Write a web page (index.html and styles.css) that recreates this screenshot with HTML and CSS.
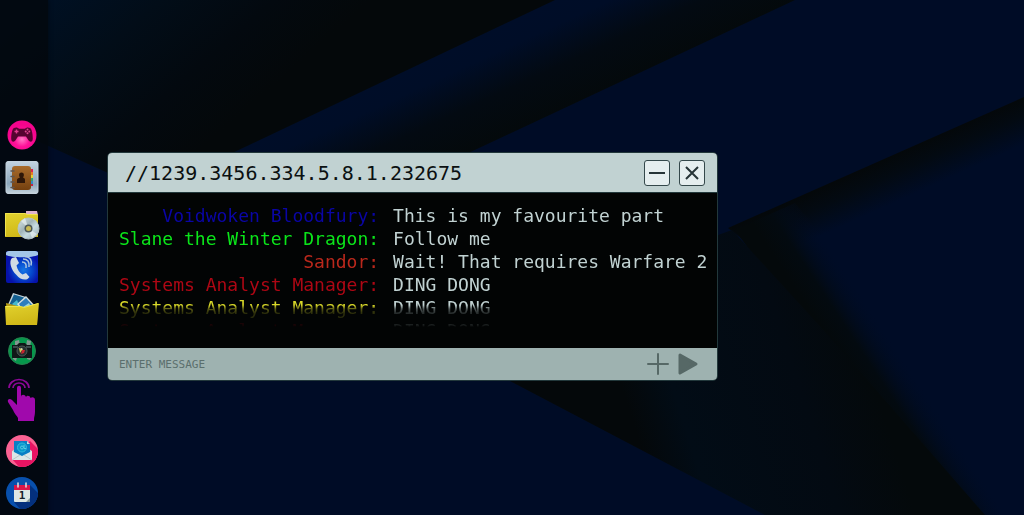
FILE: index.html
```html
<!DOCTYPE html>
<html lang="en">
<head>
<meta charset="utf-8">
<meta name="viewport" content="width=device-width, initial-scale=1">
<title>Desktop chat</title>
<link rel="stylesheet" href="styles.css">
</head>
<body>
<div class="desktop">
  <svg class="wallpaper" viewBox="0 0 1024 515" preserveAspectRatio="none" aria-hidden="true">
    <defs>
      <linearGradient id="band" gradientUnits="userSpaceOnUse" x1="440" y1="54" x2="486" y2="154">
        <stop offset="0" stop-color="#000d28"/><stop offset=".2" stop-color="#000d27"/><stop offset=".55" stop-color="#030a12"/><stop offset="1" stop-color="#04090a"/>
      </linearGradient>
      <linearGradient id="corner" gradientUnits="userSpaceOnUse" x1="60" y1="-10" x2="200" y2="150">
        <stop offset="0" stop-color="#001023"/><stop offset=".35" stop-color="#020d18"/><stop offset=".7" stop-color="#03090f"/><stop offset="1" stop-color="#04080a"/>
      </linearGradient>
      <linearGradient id="edge" gradientUnits="userSpaceOnUse" x1="876" y1="163" x2="894" y2="203">
        <stop offset="0" stop-color="#04080a"/><stop offset=".4" stop-color="#030a12"/><stop offset="1" stop-color="#000c26"/>
      </linearGradient>
      <linearGradient id="wedge" gradientUnits="userSpaceOnUse" x1="640" y1="444" x2="870" y2="370">
        <stop offset="0" stop-color="#04080a"/><stop offset=".2" stop-color="#020c16"/><stop offset=".7" stop-color="#030a12"/><stop offset="1" stop-color="#04090b"/>
      </linearGradient>
      <linearGradient id="shade" gradientUnits="userSpaceOnUse" x1="840" y1="357" x2="884" y2="328">
        <stop offset="0" stop-color="#04090b"/><stop offset=".4" stop-color="#030a10"/><stop offset="1" stop-color="#000c26" stop-opacity="0"/>
      </linearGradient>
    </defs>
    <path fill="#000c26" d="M0 0h1024v515H0z"/>
    <path fill="url(#band)" d="M555 0H795L400 185 150 190z"/>
    <path fill="url(#corner)" d="M0 0H555L150 192 0 124z"/>
    <path fill="url(#edge)" d="M1024 97V182L800 285 728 228z"/>
    <path fill="url(#shade)" d="M735 230L795 203 1024 480V515H940z"/>
    <path fill="url(#wedge)" d="M718 235L732 230 828 335 985 515H765L510 381z"/>
  </svg>

  <nav class="dock" aria-label="Applications">
    <button class="dock-item" type="button" aria-label="Games">
      <svg width="30" height="30" viewBox="0 0 30 30">
        <defs><radialGradient id="pink" cy=".65"><stop offset="0" stop-color="#ff79c4"/><stop offset=".5" stop-color="#ff129a"/><stop offset="1" stop-color="#f5048c"/></radialGradient></defs>
        <circle cx="15" cy="15" r="14.500" fill="url(#pink)"/>
        <path fill="#560330" d="M7 8c2-1.200 4-.5 5 .7h6c1-1.200 3-1.900 5-.7 2 1 2.800 6.500 2.800 10.500 0 4-3 4-4.500 1.500L19 16.500h-8L8.700 20c-1.500 2.500-4.500 2.500-4.500-1.500C4.200 14.500 5 9 7 8z"/>
        <path stroke="#e23d92" stroke-width="1.400" d="M7.500 11.500h4M9.500 9.500v4"/>
        <g fill="#df438e"><circle cx="20.500" cy="9.600" r="1"/><circle cx="20.500" cy="13.200" r="1"/><circle cx="18.700" cy="11.400" r="1"/><circle cx="22.300" cy="11.400" r="1"/></g>
      </svg>
    </button>
    <button class="dock-item" type="button" aria-label="Contacts">
      <svg width="34" height="40" viewBox="0 0 34 40">
        <defs><linearGradient id="tile" x2="0" y2="1"><stop offset="0" stop-color="#c3d3e0"/><stop offset=".7" stop-color="#8ba6bc"/><stop offset="1" stop-color="#c5d3dc"/></linearGradient><linearGradient id="leather" x2="0" y2="1"><stop offset="0" stop-color="#a96c2c"/><stop offset="1" stop-color="#74400f"/></linearGradient></defs>
        <rect x="1" y="3.500" width="32" height="32" rx="2" fill="url(#tile)" stroke="#c4d2dd"/>
        <path fill="#db244c" d="M24 11h4v4h-4z"/><path fill="#e77c22" d="M24 14h4v4h-4z"/><path fill="#e4cf35" d="M24 17h4v4h-4z"/><path fill="#36a56c" d="M24 20h4v4h-4z"/><path fill="#318bc6" d="M24 23h4v3h-4z"/><path fill="#c32448" d="M24 26h4v2h-4z"/>
        <rect x="7" y="8" width="19" height="24" rx="3" fill="url(#leather)"/>
        <path fill="#2d1608" d="M12 25v-3c0-1.500 1.500-2 3-2.500-1.500-2-1.200-5 1.500-5s3 3 1.500 5c1.500.5 2 1 2 2.500v3z"/>
        <path stroke="#5f564f" stroke-width="1.500" stroke-linecap="round" d="M6 13h3M6 18.500h3M6 24h3M6 29.500h3"/>
      </svg>
    </button>
    <button class="dock-item" type="button" aria-label="Disc folder">
      <svg width="36" height="36" viewBox="0 0 36 36">
        <defs><linearGradient id="gold" x2=".3" y2="1"><stop offset="0" stop-color="#e2d32f"/><stop offset="1" stop-color="#d0b818"/></linearGradient><linearGradient id="disc" x2="1" y2="1"><stop offset="0" stop-color="#dce9ea"/><stop offset=".4" stop-color="#a1b4b8"/><stop offset=".6" stop-color="#c6dce1"/><stop offset="1" stop-color="#95a6b1"/></linearGradient></defs>
        <path fill="#ddb3ce" d="M22 5h11l1 4H22z"/>
        <path fill="url(#gold)" d="M1 7h20l2 1.500h11V31H1z"/><path fill="none" stroke="#f0e34f" d="M1.500 30V7.500H21l2 1h10"/>
        <circle cx="24.500" cy="22.500" r="10.500" fill="url(#disc)" stroke="#b3c4c8"/>
        <path fill="#edf4f4" opacity=".65" d="M24.500 22.500L17 15l4-3zM24.500 22.500L33 28l-5 4z"/>
        <circle cx="24.500" cy="22.500" r="4" fill="#4e5958"/><circle cx="24.500" cy="22.500" r="2.500" fill="#c8ba52"/>
      </svg>
    </button>
    <button class="dock-item" type="button" aria-label="Phone">
      <svg width="34" height="34" viewBox="0 0 34 34">
        <defs><radialGradient id="call" cx=".55" cy=".6"><stop offset="0" stop-color="#1677e5"/><stop offset=".55" stop-color="#0546cc"/><stop offset="1" stop-color="#0612aa"/></radialGradient></defs>
        <rect x="1" y="1" width="32" height="32" rx="2" fill="url(#call)"/>
        <path fill="#a2c5e8" d="M1 3c0-1 1-2 3-2h26c2 0 3 1 3 2v2c-5 3-27 3-32 0z"/>
        <path fill="#d0dbe3" d="M7 8l4-1 3 6-2.500 2.500c1 4.500 3 7 6 9l3.500-1.500 3.500 4-2 2c-3 1.500-8 0-11-4C6 20 3.500 11 7 8z"/>
        <path fill="none" stroke="#adc6df" stroke-width="1.500" d="M17 12q5 0 4 6M18 9q7 0 6 8M20 6.500q8 1 6 9"/>
      </svg>
    </button>
    <button class="dock-item" type="button" aria-label="Pictures folder">
      <svg width="34" height="36" viewBox="0 0 34 36">
        <path fill="#c3d3da" d="M8 1l13 4-4 15-15-5z"/><path fill="#145f91" d="M9 2.500l10 3-3 12-12-4z"/><path fill="#46b8cd" d="M7 12l5-4 3 7-1 4z"/>
        <path fill="#d1dedf" d="M21 4l12 13-11 8-10-13z"/><path fill="#2e7ebc" d="M21 6l9 10-9 7-7-11z"/><path fill="#9bd3da" d="M18 15l6-4 3 6-5 4z"/>
        <path fill="#b39916" d="M1 11l12 3 4 4h16l-1 15H3z"/>
        <path fill="url(#gold)" d="M0 14h15l4 1 15-4-2 22H1z"/><path fill="none" stroke="#efe448" d="M1 14.500h14l4 1 14-4"/>
      </svg>
    </button>
    <button class="dock-item" type="button" aria-label="Camera">
      <svg width="30" height="30" viewBox="0 0 30 30">
        <circle cx="15" cy="15" r="13.500" fill="#05984c" stroke="#27804e"/>
        <path fill="#83968f" d="M8 5l4-1 1 5H8zM20 4l4 1-1 6h-4zM6 20l5-2-2 7-3-2zM20 19l5 1-2 4-3-1z"/>
        <path fill="#101818" d="M5 9h5l2-2h6l2 2h5v13H5z"/><path stroke="#677b7c" d="M6 11h5m8 0h5"/>
        <circle cx="15" cy="15" r="5" fill="#253030" stroke="#4b5856"/><path fill="#d1c65a" d="M12 12l4 1-3 4z"/><path fill="#c82531" d="M15 14h3l-1 3-3 1z"/><path fill="#dae0cd" d="M14 12l2 1-2 1z"/>
      </svg>
    </button>
    <button class="dock-item" type="button" aria-label="Touch">
      <svg width="34" height="52" viewBox="0 0 34 52">
        <path fill="none" stroke="#8c0896" stroke-width="1.700" d="M4 14a10 8.500 0 0 1 20 0M8 14a6 5 0 0 1 12 0"/>
        <path fill="#a009ac" d="M12 14c0-3 4-3 4 0v9c0-3 4-3 5 0 1-2 4-1.500 4.500 1 2-1.500 4.500-.5 4.500 2v12c0 3-1 5-1 7v2H13v-3c-1-2-4-5-5-8L3 28c-1-3 2-4 4-2l5 5z"/>
      </svg>
    </button>
    <button class="dock-item" type="button" aria-label="Mail">
      <svg width="34" height="34" viewBox="0 0 34 34">
        <defs><clipPath id="mailRound"><circle cx="17" cy="17" r="16"/></clipPath></defs>
        <g clip-path="url(#mailRound)"><path fill="#fa6293" d="M0 0h34v34H0z"/><path fill="#e81463" d="M25 7l9 9v18H15l-8-9z"/></g>
        <path fill="#bdd2d3" d="M7 17l10-7 10 7v9H7z"/><path fill="#087fc4" d="M9 7h13l3 3v10l-8 4-8-4z"/><path fill="#c8d9dd" d="M22 7v3h3z"/>
        <circle cx="17" cy="13.500" r="4.500" fill="#079acd" stroke="#33b8db"/><circle cx="17" cy="13.500" r="1.500" fill="none" stroke="#5dc9df"/><path fill="none" stroke="#5dc9df" d="M19 11v3q1 2 2 0"/>
        <path fill="#dce7e7" d="M7 17l10 5 10-5v9H7z"/><path fill="none" stroke="#b7c8cb" d="M7 26l8-5m12 5l-8-5"/>
      </svg>
    </button>
    <button class="dock-item" type="button" aria-label="Calendar">
      <svg width="34" height="34" viewBox="0 0 34 34">
        <defs><clipPath id="dateRound"><circle cx="17" cy="17" r="16"/></clipPath></defs>
        <g clip-path="url(#dateRound)"><path fill="#0850ad" d="M0 0h34v34H0z"/><path fill="#04307d" d="M25 9l9 9v16H16l-7-8z"/></g>
        <rect x="9" y="9" width="16" height="17" rx="1" fill="#dde8e5"/><path fill="#db164b" d="M9 9h16v5H9z"/>
        <path stroke="#dce4e5" stroke-width="1.500" stroke-linecap="round" d="M13 7v4M21 7v4"/>
        <text class="calendar-day" x="17" y="23" text-anchor="middle">1</text><path fill="#819598" d="M25 22v4h-4z"/>
      </svg>
    </button>
  </nav>

  <main class="chat-window">
    <header class="title-bar">
      <h1 class="title">//1239.3456.334.5.8.1.232675</h1>
      <button class="window-button" type="button" aria-label="Minimise"><svg width="24" height="24" viewBox="0 0 24 24"><path d="M4 12h16"/></svg></button>
      <button class="window-button" type="button" aria-label="Close"><svg width="24" height="24" viewBox="0 0 24 24"><path d="M6 6l12 12M18 6L6 18"/></svg></button>
    </header>
    <section class="conversation" aria-label="Messages">
      <dl class="messages">
        <dt class="name blue">Voidwoken Bloodfury:</dt><dd class="message">This is my favourite part</dd>
        <dt class="name green">Slane the Winter Dragon:</dt><dd class="message">Follow me</dd>
        <dt class="name coral">Sandor:</dt><dd class="message">Wait! That requires Warfare 2</dd>
        <dt class="name red">Systems Analyst Manager:</dt><dd class="message">DING DONG</dd>
        <dt class="name yellow">Systems Analyst Manager:</dt><dd class="message">DING DONG</dd>
        <dt class="name red">Systems Analyst Manager:</dt><dd class="message">DING DONG</dd>
      </dl>
    </section>
    <form class="composer">
      <input class="entry" type="text" aria-label="Message" placeholder="ENTER MESSAGE">
      <button class="action" type="button" aria-label="Add"><svg width="24" height="24" viewBox="0 0 24 24"><path fill="none" stroke="#566866" stroke-width="2" stroke-linecap="round" d="M2 12h20M12 2v20"/></svg></button>
      <button class="action" type="submit" aria-label="Send"><svg width="24" height="24" viewBox="0 0 24 24"><path fill="#566866" stroke="#566866" stroke-width="3" stroke-linejoin="round" d="M4 3l16 9L4 21z"/></svg></button>
    </form>
  </main>
</div>
</body>
</html>
```
FILE: styles.css
```css
* { box-sizing: border-box; }
body { margin: 0; background: #000c26; font-family: "DejaVu Sans Mono", monospace; }
button { padding: 0; border: 0; background: none; cursor: pointer; }
svg { display: block; }
.desktop { position: relative; display: flex; min-height: 100vh; overflow: hidden; }
.wallpaper { position: absolute; inset: 0; width: 100%; height: 100%; }
.dock {
  position: relative;
  display: flex;
  flex-direction: column;
  align-items: center;
  justify-content: flex-end;
  gap: 8px;
  width: 48px;
  padding: 5px 4px 5px 0;
  background: #02070dcc;
  box-shadow: 0 0 4px #02070dcc;
}
.calendar-day { font: bold 11px "DejaVu Sans Mono", monospace; fill: #172229; }
.chat-window {
  position: absolute;
  left: 107px;
  top: 152px;
  max-width: calc(100% - 116px);
  overflow: hidden;
  border: 1px solid #22383b;
  border-radius: 5px;
  background: #020404;
}
.title-bar {
  display: flex;
  align-items: center;
  gap: 9px;
  height: 39px;
  padding: 0 12px 0 17px;
  background: #c1d2d2;
}
.title { flex: 1; margin: 0; color: #0b1011; font-size: 20px; font-weight: 400; line-height: 24px; }
.window-button {
  border: 1px solid #34484b;
  border-radius: 3px;
  background: #e5eeef;
}
.window-button svg { fill: none; stroke: #263437; stroke-width: 2; }
.conversation { padding: 11px 10px 6px 11px; border-top: 1px solid #22383b; }
.messages {
  display: grid;
  grid-template-columns: max-content auto;
  column-gap: 14px;
  margin: 0;
  font-size: 18px;
  line-height: 23px;
  mask-image: linear-gradient(#000 101px, #0006 105px, #0003 109px, #0002 120px, #0002 121px, transparent 123px);
}
.name { text-align: right; }
.message { margin: 0; color: #c1d2d2; }
.blue { color: #0a05a5; }
.green { color: #0be51a; }
.coral { color: #ba281c; }
.red { color: #ad0714; }
.yellow { color: #d9d92a; }
.composer {
  display: flex;
  align-items: center;
  gap: 6px;
  height: 32px;
  padding: 0 17px 0 11px;
  background: #9eb2b0;
}
.entry {
  flex: 1;
  min-width: 0;
  padding: 2px 0 0;
  border: 0;
  outline: 0;
  background: none;
  color: #263437;
  font: 11px/16px "DejaVu Sans Mono", monospace;
}
.entry::placeholder { color: #5b6f6d; opacity: 1; }
```
